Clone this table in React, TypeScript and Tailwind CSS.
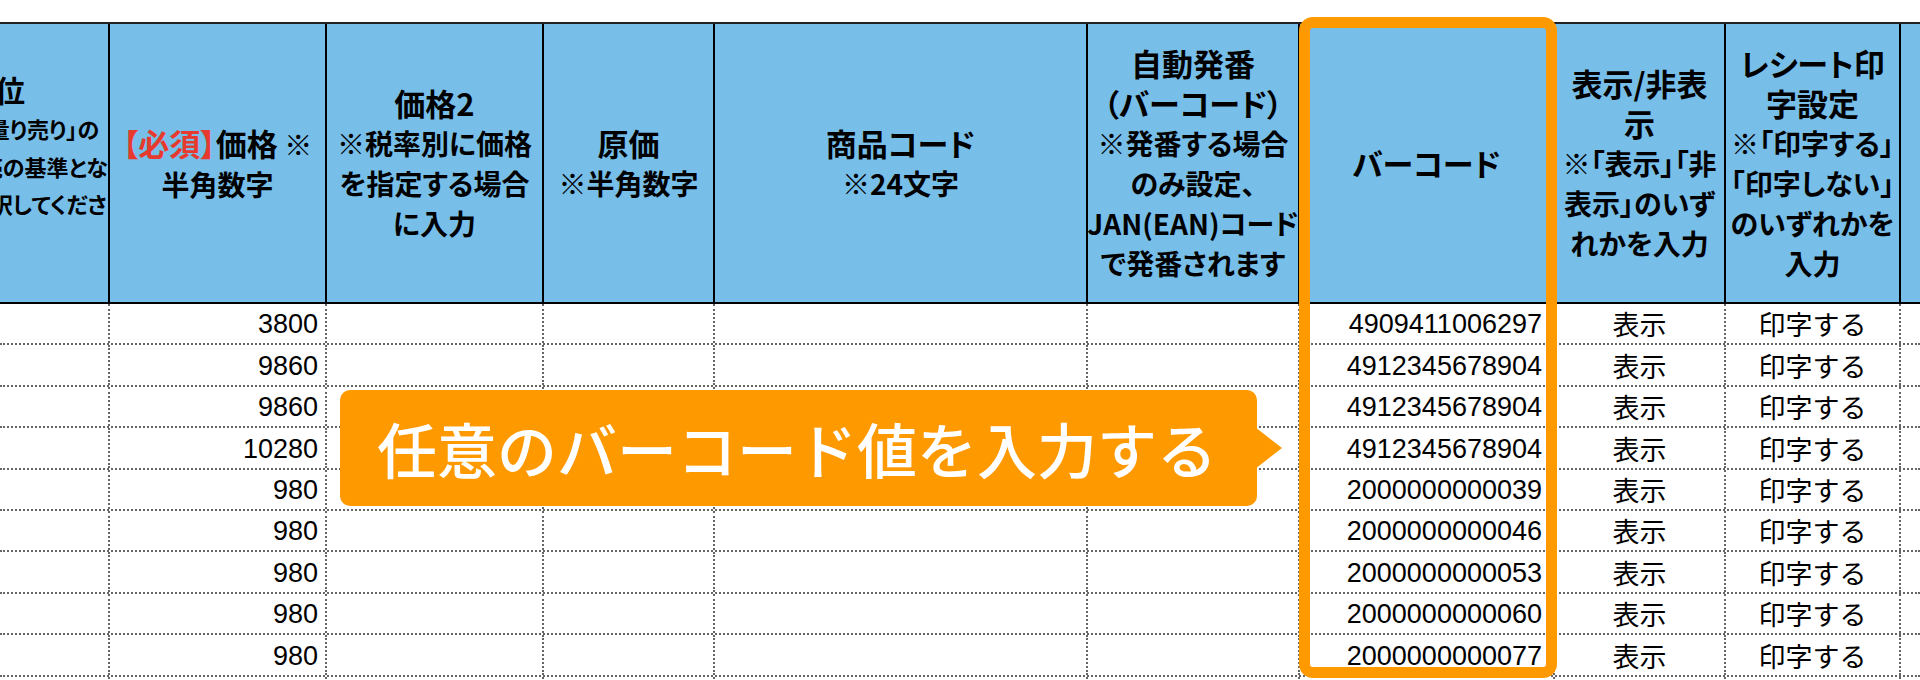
import React from "react";

const GRID =
  "grid grid-cols-[110px_217px_217px_171px_373px_212px_255px_171px_175px_1fr]";

type Line = { t: React.ReactNode; big?: boolean };

function HeadCell({ lines, last }: { lines: Line[]; last?: boolean }) {
  return (
    <div
      className={
        "h-[280px] border-b-2 border-black bg-[#77bee9] flex flex-col items-center justify-center overflow-hidden text-center " +
        (last ? "" : "border-r-2")
      }
    >
      {lines.map((l, i) => (
        <div
          key={i}
          className={
            "whitespace-nowrap leading-[40px] " +
            (l.big ? "text-[31px]" : "text-[28px]")
          }
        >
          {l.t}
        </div>
      ))}
    </div>
  );
}

const rows: [string, string][] = [
  ["3800", "4909411006297"],
  ["9860", "4912345678904"],
  ["9860", "4912345678904"],
  ["10280", "4912345678904"],
  ["980", "2000000000039"],
  ["980", "2000000000046"],
  ["980", "2000000000053"],
  ["980", "2000000000060"],
  ["980", "2000000000077"],
  ["", ""],
];

const dcell =
  "border-r-2 border-dotted border-[#666] flex items-center overflow-hidden";

export default function App() {
  return (
    <div className="relative w-[1920px] h-[680px] overflow-hidden bg-white pt-[22px] text-black">
      {/* header */}
      <div
        className={
          GRID +
          " border-t-2 border-[#222] font-['Noto_Sans_CJK_JP',sans-serif] font-bold [font-feature-settings:'palt']"
        }
      >
        {/* Column A (cropped at the window edge) */}
        <div className="h-[280px] border-b-2 border-r-2 border-black bg-[#77bee9] flex items-center overflow-hidden">
          <div className="shrink-0 w-[230px] -ml-[120px] pb-[36px] text-center">
            <div className="text-[30px] leading-[40px] whitespace-nowrap">単位</div>
            <div className="text-[22px] leading-[38px] whitespace-nowrap">※単位で「量り売り」の</div>
            <div className="text-[22px] leading-[38px] whitespace-nowrap">場合は、販売の基準とな</div>
            <div className="text-[22px] leading-[36px] whitespace-nowrap">る単位を選択してくださ</div>
          </div>
        </div>
        <HeadCell
          lines={[
            {
              t: (
                <>
                  <span className="text-[#e63a2e]">【必須】</span>価格
                  <span className="text-[28px]"> ※</span>
                </>
              ),
              big: true,
            },
            { t: "半角数字" },
          ]}
        />
        <HeadCell
          lines={[
            { t: "価格2", big: true },
            { t: "※税率別に価格" },
            { t: "を指定する場合" },
            { t: "に入力" },
          ]}
        />
        <HeadCell lines={[{ t: "原価", big: true }, { t: "※半角数字" }]} />
        <HeadCell lines={[{ t: "商品コード", big: true }, { t: "※24文字" }]} />
        <HeadCell
          lines={[
            { t: "自動発番", big: true },
            { t: "（バーコード）", big: true },
            { t: "※発番する場合" },
            { t: "のみ設定、" },
            { t: "JAN(EAN)コード" },
            { t: "で発番されます" },
          ]}
        />
        <HeadCell lines={[{ t: "バーコード", big: true }]} />
        <HeadCell
          lines={[
            { t: "表示/非表", big: true },
            { t: "示", big: true },
            { t: "※「表示」「非" },
            { t: "表示」のいず" },
            { t: "れかを入力" },
          ]}
        />
        <HeadCell
          lines={[
            { t: "レシート印", big: true },
            { t: "字設定", big: true },
            { t: "※「印字する」" },
            { t: "「印字しない」" },
            { t: "のいずれかを" },
            { t: "入力" },
          ]}
        />
        <HeadCell lines={[]} last />
      </div>

      {/* data rows */}
      {rows.map(([price, code], i) => (
        <div
          key={i}
          className={
            GRID +
            " h-[41.4px] border-b-2 border-dotted border-[#666] font-['Liberation_Sans','Noto_Sans_CJK_JP',sans-serif]"
          }
        >
          <div className={dcell} />
          <div className={dcell + " justify-end pr-[7px] pt-[2px] text-[27px]"}>{price}</div>
          <div className={dcell} />
          <div className={dcell} />
          <div className={dcell} />
          <div className={dcell} />
          <div className={dcell + " justify-end pr-[11px] pt-[2px] text-[27px]"}>{code}</div>
          <div className={dcell + " justify-center pt-[2px] text-[27px] font-['Noto_Sans_CJK_JP',sans-serif]"}>
            {code ? "表示" : ""}
          </div>
          <div className={dcell + " justify-center pt-[2px] text-[27px] font-['Noto_Sans_CJK_JP',sans-serif]"}>
            {code ? "印字する" : ""}
          </div>
          <div className="" />
        </div>
      ))}

      {/* orange highlight frame around barcode column */}
      <div className="absolute left-[1299px] top-[17px] w-[258px] h-[661px] border-[11px] border-[#ff9900] rounded-[14px]" />

      {/* callout */}
      <div className="absolute left-[340px] top-[390px] w-[917px] h-[116px] rounded-[10px] bg-[#ff9900] flex items-center pl-[37px] text-white text-[60px] font-medium font-['Noto_Sans_CJK_JP',sans-serif] whitespace-nowrap">
        任意のバーコード値を入力する
      </div>
      <svg
        className="absolute left-[1255px] top-[427px]"
        width="28"
        height="42"
        viewBox="0 0 28 42"
      >
        <polygon points="0,0 27,21 0,42" fill="#ff9900" />
      </svg>
    </div>
  );
}
